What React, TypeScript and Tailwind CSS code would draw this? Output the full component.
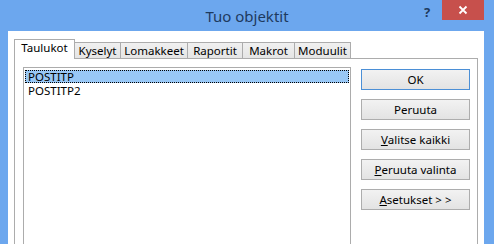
import React from "react";

const font = { fontFamily: '"Noto Sans", "DejaVu Sans", sans-serif' };

function Tab({ label, w, selected }: { label: string; w: string; selected?: boolean }) {
  if (selected) {
    return (
      <div
        className={`${w} h-[20px] -mb-px bg-white border border-b-0 border-[#acacac] flex items-center justify-center text-[11.5px] leading-none text-black relative z-10 pb-[3px]`}
      >
        {label}
      </div>
    );
  }
  return (
    <div
      className={`${w} h-[16px] border-t border-r border-[#acacac] bg-gradient-to-b from-[#f0f0f0] to-[#e5e5e5] flex items-center justify-center text-[11.5px] leading-none text-black`}
    >
      {label}
    </div>
  );
}

function Btn({ children, def }: { children: React.ReactNode; def?: boolean }) {
  return (
    <div
      className={`w-[109px] h-[21px] border ${
        def ? "border-[#4b8fd6]" : "border-[#adadad]"
      } bg-gradient-to-b from-[#f2f2f2] to-[#e3e3e3] flex items-center justify-center text-[11.5px] leading-none text-black`}
    >
      {children}
    </div>
  );
}

export default function App() {
  return (
    <div className="w-[494px] h-[244px] overflow-hidden bg-[#6ca7ee] flex flex-col" style={font}>
      <div className="h-[31px] shrink-0 flex relative">
        <div className="flex-1 flex items-center justify-center text-[15px] text-[#1e3a5e] pt-[1px]">
          Tuo objektit
        </div>
        <div className="absolute left-[424px] top-[3px] text-[13px] font-bold text-[#1e3a5e]">?</div>
        <div className="absolute left-[442px] top-0 w-[42px] h-[20px] bg-[#c7504c] flex items-center justify-center">
          <svg width="10" height="10" viewBox="0 0 10 10">
            <path d="M1.5 1.5 L8.5 8.5 M8.5 1.5 L1.5 8.5" stroke="white" strokeWidth="1.8" />
          </svg>
        </div>
      </div>
      <div className="flex-1 ml-[8px] mr-[10px] bg-white pl-[6px] pr-[6px] pt-[8px]">
        <div className="flex items-end h-[19px]">
          <Tab label="Taulukot" w="w-[61px]" selected />
          <Tab label="Kyselyt" w="w-[46px]" />
          <Tab label="Lomakkeet" w="w-[67px]" />
          <Tab label="Raportit" w="w-[55px]" />
          <Tab label="Makrot" w="w-[52px]" />
          <Tab label="Moduulit" w="w-[56px]" />
        </div>
        <div className="h-[200px] border border-[#acacac] flex pl-[8px] pt-[8px] pr-[7px]">
          <div className="w-[329px] h-[180px] border border-[#acacac] px-px pt-[2px]">
            <div className="h-[13px] mb-px bg-[#99c8f6] border border-dotted border-black flex items-center pl-[2px] text-[11.5px] leading-none text-black">
              POSTITP
            </div>
            <div className="h-[14px] flex items-center pl-[3px] text-[11.5px] leading-none text-black">POSTITP2</div>
          </div>
          <div className="ml-[10px] pt-[2px] flex flex-col gap-[9px]">
            <Btn def>OK</Btn>
            <Btn>Peruuta</Btn>
            <Btn>
              <span className="underline">V</span>alitse kaikki
            </Btn>
            <Btn>
              <span className="underline">P</span>eruuta valinta
            </Btn>
            <Btn>
              <span className="underline">A</span>setukset &gt; &gt;
            </Btn>
          </div>
        </div>
      </div>
    </div>
  );
}
